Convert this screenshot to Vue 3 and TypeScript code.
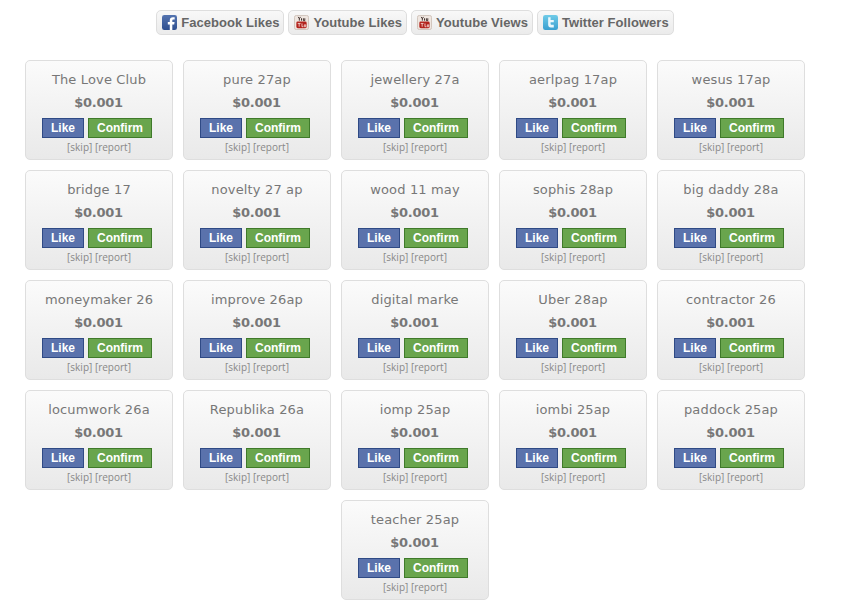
<script setup lang="ts">
interface Tab {
  label: string
  icon: 'fb' | 'yt' | 'tw'
}

const tabs: Tab[] = [
  { label: 'Facebook Likes', icon: 'fb' },
  { label: 'Youtube Likes', icon: 'yt' },
  { label: 'Youtube Views', icon: 'yt' },
  { label: 'Twitter Followers', icon: 'tw' },
]

const offers = [
  'The Love Club', 'pure 27ap', 'jewellery 27a', 'aerlpag 17ap', 'wesus 17ap',
  'bridge 17', 'novelty 27 ap', 'wood 11 may', 'sophis 28ap', 'big daddy 28a',
  'moneymaker 26', 'improve 26ap', 'digital marke', 'Uber 28ap', 'contractor 26',
  'locumwork 26a', 'Republika 26a', 'iomp 25ap', 'iombi 25ap', 'paddock 25ap',
  'teacher 25ap',
]
</script>

<template>
  <div class="page">
    <nav class="tabs">
      <a v-for="tab in tabs" :key="tab.label" class="tab">
        <svg v-if="tab.icon === 'fb'" class="icon" viewBox="0 0 16 16">
          <defs>
            <linearGradient id="fb-fill" x1="0" y1="0" x2="0" y2="1">
              <stop offset="0" stop-color="#5474b0" />
              <stop offset="1" stop-color="#2f4f8f" />
            </linearGradient>
          </defs>
          <rect width="16" height="16" rx="2.5" fill="url(#fb-fill)" />
          <path d="M11 16V10h2l.4-2.600H11V6c0-.8.3-1.200 1.200-1.200h1.300V2.400c-.4 0-1.100-.1-1.900-.1-2 0-3.300 1.200-3.300 3.300v1.800H6.200V10h2.100v6z" fill="#fff" />
        </svg>
        <svg v-else-if="tab.icon === 'yt'" class="icon" viewBox="0 0 16 16">
          <rect x=".5" y=".5" width="15" height="15" rx="2" fill="#efe6e0" stroke="#cfc2ba" />
          <path d="M4.500 2l1.200 2 1.200-2M5.700 4v2M8 3.500v2.500M10 3.500v2.500h1.500V3.500" fill="none" stroke="#3a2a26" stroke-width="1" />
          <rect x="2.500" y="7" width="11" height="7" rx="1.500" fill="#b3221c" />
          <path d="M4 9h3M5.500 9v3.500M8.500 9v3.500h1.500M11 10.500h1.500v2H11z" fill="none" stroke="#f4dcd8" stroke-width=".9" />
        </svg>
        <svg v-else class="icon" viewBox="0 0 16 16">
          <defs>
            <linearGradient id="tw-fill" x1="0" y1="0" x2="0" y2="1">
              <stop offset="0" stop-color="#6fcbe8" />
              <stop offset="1" stop-color="#3a9fd0" />
            </linearGradient>
          </defs>
          <rect width="16" height="16" rx="2.5" fill="url(#tw-fill)" />
          <path d="M5.500 2.500h2.600v2.700h3.400v2.600H8.100v1.600c0 .8.400 1.100 1.100 1.100h2.300v2.700H8.300c-1.800 0-2.800-1.100-2.800-2.800z" fill="#eaf7fc" />
        </svg>
        <span>{{ tab.label }}</span>
      </a>
    </nav>

    <section class="offers">
      <article v-for="name in offers" :key="name" class="card">
        <h3 class="name">{{ name }}</h3>
        <div class="price">$0.001</div>
        <div class="actions">
          <button class="btn like" type="button">Like</button>
          <button class="btn confirm" type="button">Confirm</button>
        </div>
        <div class="links">[skip] [report]</div>
      </article>
    </section>
  </div>
</template>

<style>
html,
body {
  background: #fff;
}
</style>

<style scoped>
.page {
  width: 830px;
  padding-top: 10px;
}

.tabs {
  display: flex;
  justify-content: center;
  gap: 4px;
  height: 25px;
  margin-bottom: 25px;
}

.tab {
  display: flex;
  align-items: center;
  gap: 4px;
  padding: 0 4px 0 5px;
  border: 1px solid #dedede;
  border-radius: 5px;
  background: linear-gradient(#f8f8f8, #ebebeb);
  color: #666;
  font: bold 13px "Liberation Sans", Arial, sans-serif;
  letter-spacing: 0.05px;
}

.icon {
  width: 15px;
  height: 15px;
  flex: none;
}

.offers {
  display: flex;
  flex-wrap: wrap;
  justify-content: center;
  gap: 10px;
}

.card {
  box-sizing: border-box;
  width: 148px;
  height: 100px;
  padding-top: 10px;
  border: 1px solid #dedede;
  border-radius: 5px;
  background: linear-gradient(#fbfbfb, #e9e9e9);
  text-align: center;
}

.name {
  margin: 0;
  color: #777;
  font: normal 13px/17px "DejaVu Sans", Verdana, sans-serif;
  letter-spacing: 0.15px;
}

.price {
  margin-top: 6px;
  padding-right: 1px;
  color: #777;
  font: bold 13px/17px "DejaVu Sans", Verdana, sans-serif;
  letter-spacing: -0.3px;
}

.actions {
  display: flex;
  justify-content: center;
  gap: 4px;
  margin-top: 7px;
  padding-right: 4px;
}

.btn {
  box-sizing: border-box;
  height: 20px;
  padding: 0;
  border: 1px solid;
  color: #fff;
  font: bold 12px "Liberation Sans", Arial, sans-serif;
}

.like {
  width: 42px;
  border-color: #2f4a85;
  background: #5a72ac;
}

.confirm {
  width: 64px;
  border-color: #3f7a2a;
  background: #69a54d;
}

.links {
  margin-top: 2px;
  color: #888;
  font: 10px/15px "Open Sans", Tahoma, sans-serif;
}
</style>
